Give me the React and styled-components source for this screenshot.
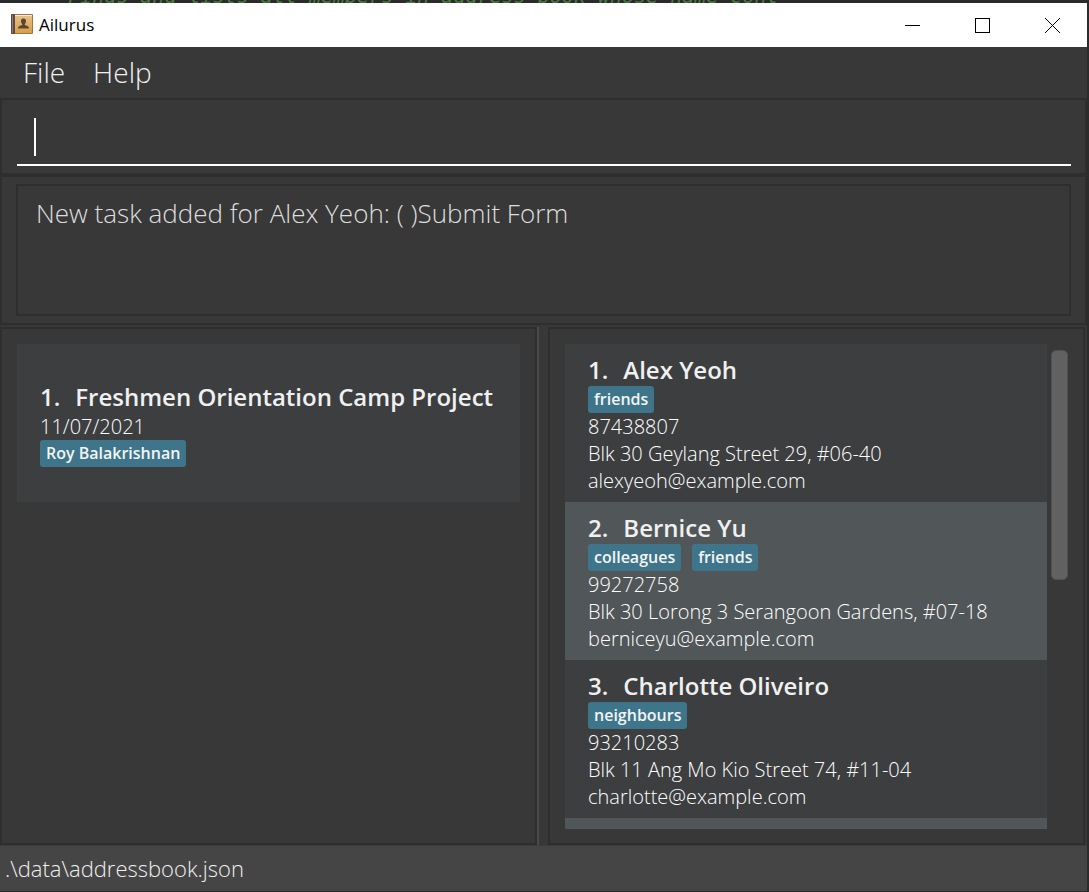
import React from 'react';
import styled, { createGlobalStyle } from 'styled-components';

const Global = createGlobalStyle`
  * { box-sizing: border-box; }
  html, body, #root { height: 100%; }
  body {
    margin: 0;
    background: #2b2b2b;
    color: #f0f0f0;
    font-family: 'Open Sans', 'Noto Sans', sans-serif;
    overflow: hidden;
  }
  button, input { font: inherit; color: inherit; background: none; border: 0; padding: 0; margin: 0; }
`;

const Desktop = styled.div`
  height: 100vh;
  display: flex;
  flex-direction: column;
  padding: 0 2px 1px 0;
`;

const EditorStrip = styled.div`
  flex: 0 0 3px;
  overflow: hidden;
  display: flex;
  align-items: flex-end;
  padding-left: 44px;
  font: italic 20px/14px 'DejaVu Sans Mono', monospace;
  white-space: pre;
  color: #4a7a40;
`;

const Window = styled.main`
  flex: 1;
  min-height: 0;
  display: flex;
  flex-direction: column;
  background: #383838;
`;

const TitleBar = styled.header`
  flex: 0 0 44px;
  display: flex;
  align-items: center;
  background: #fff;
  color: #000;
  padding-left: 11px;
`;

const Title = styled.h1`
  flex: 1;
  margin: 0 0 0 6px;
  font: 400 17px/24px 'Open Sans', sans-serif;
`;

const WindowButton = styled.button`
  width: 70px;
  height: 44px;
  display: grid;
  place-items: center;
`;

const MenuBar = styled.nav`
  flex: 0 0 51px;
  display: flex;
  gap: 28px;
  padding: 0 23px;
`;

const MenuButton = styled.button`
  font-size: 28px;
  line-height: 48px;
  font-weight: 300;
  padding-bottom: 2px;
`;

const Panel = styled.section`
  border: 2px solid #2e2e2e;
  padding: ${(p) => p.$pad};
`;

const CommandInput = styled.input`
  display: block;
  width: 100%;
  height: 51px;
  padding: 0 18px;
  font-size: 28px;
  font-weight: 300;
  border-bottom: 2px solid #fff;
  outline: none;
  caret-color: transparent;
`;

const CommandBox = styled.div`
  position: relative;
`;

const Caret = styled.span`
  position: absolute;
  left: 17px;
  top: 3px;
  width: 2px;
  height: 38px;
  background: #fff;
`;

const Result = styled.output`
  display: block;
  height: 132px;
  border: 2px solid #2e2e2e;
  padding: 8px 18px;
  font-size: 26px;
  line-height: 38px;
  font-weight: 300;
  color: #dedede;
`;

const Split = styled.div`
  flex: 1;
  min-height: 0;
  display: flex;
  margin: 2px 2px 0 0;
`;

const Pane = styled(Panel)`
  flex: 1 1 0;
  min-width: 0;
  overflow: hidden;
  display: flex;
`;

const Divider = styled.div`
  flex: 0 0 11px;
  border-left: 2px solid #4a4a4a;
`;

const List = styled.ul`
  flex: 1;
  min-width: 0;
  margin: 0;
  padding: 0;
  list-style: none;
  overflow: hidden;
`;

const Card = styled.li`
  height: 158px;
  display: flex;
  flex-direction: column;
  justify-content: center;
  padding: 2px 23px 0;
  background: ${(p) => (p.$alt ? '#515658' : '#3c3e3f')};
`;

const Name = styled.h2`
  margin: 0;
  display: flex;
  gap: 15px;
  font-size: 24px;
  line-height: 32px;
  font-weight: 600;
  white-space: nowrap;
`;

const Line = styled.p`
  margin: 0;
  font-size: 20px;
  line-height: 27px;
  font-weight: 300;
  color: #fff;
  white-space: nowrap;
`;

const Tags = styled.div`
  display: flex;
  gap: 11px;
`;

const Tag = styled.span`
  padding: 0 6px;
  border-radius: 3px;
  background: #3e758a;
  color: #f4f4f4;
  font-size: 16px;
  line-height: 27px;
  font-weight: 600;
`;

const ScrollTrack = styled.div`
  flex: 0 0 21px;
  padding: 6px 0 0 4px;
`;

const ScrollThumb = styled.div`
  width: 17px;
  height: 48%;
  border: 1px solid #505050;
  border-radius: 5px;
  background: #616161;
`;

const StatusBar = styled.footer`
  flex: 0 0 46px;
  padding: 0 5px;
  background: #454545;
  border-top: 1px solid #3c3c3c;
  font-size: 22px;
  line-height: 44px;
  font-weight: 300;
`;

const people = [
  { name: 'Alex Yeoh', tags: ['friends'], phone: '87438807', address: 'Blk 30 Geylang Street 29, #06-40', email: 'alexyeoh@example.com' },
  { name: 'Bernice Yu', tags: ['colleagues', 'friends'], phone: '99272758', address: 'Blk 30 Lorong 3 Serangoon Gardens, #07-18', email: 'berniceyu@example.com' },
  { name: 'Charlotte Oliveiro', tags: ['neighbours'], phone: '93210283', address: 'Blk 11 Ang Mo Kio Street 74, #11-04', email: 'charlotte@example.com' },
];

function BookIcon() {
  return (
    <svg width="22" height="22" viewBox="0 0 22 22" aria-hidden="true">
      <defs>
        <linearGradient id="cover" x1="0" y1="0" x2="0" y2="1">
          <stop offset="0" stopColor="#e6c289" />
          <stop offset="1" stopColor="#d6a04a" />
        </linearGradient>
      </defs>
      <rect x="0" y="0" width="22" height="20" rx="1" fill="#a5763a" />
      <rect x="4" y="1" width="17" height="18" fill="url(#cover)" />
      <rect x="4" y="1" width="17" height="1" fill="#f6ead6" />
      <rect x="0" y="0" width="4" height="20" rx="1" fill="#5d4a42" />
      <rect x="1" y="1" width="1" height="18" fill="#8a7a74" />
      <path d="M12.500 4.500c-1.800 0-2.700 1.300-2.500 2.900.1 1.200.6 1.900 1.200 2.500v1.200c-1.800.5-4.200 1-4.200 3.400h11c0-2.400-2.400-2.900-4.200-3.400v-1.200c.6-.6 1.100-1.300 1.200-2.500.2-1.600-.7-2.900-2.500-2.900z" fill="#5b4636" />
    </svg>
  );
}

export default function App() {
  return (
    <Desktop>
      <Global />
      <EditorStrip>* Finds and lists all members in address book whose name cont</EditorStrip>
      <Window>
        <TitleBar>
          <BookIcon />
          <Title>Ailurus</Title>
          <WindowButton aria-label="Minimize">
            <svg width="15" height="15" shapeRendering="crispEdges"><rect y="7" width="15" height="1" /></svg>
          </WindowButton>
          <WindowButton aria-label="Maximize">
            <svg width="15" height="15" shapeRendering="crispEdges"><rect x=".5" y=".5" width="14" height="14" fill="none" stroke="#000" /></svg>
          </WindowButton>
          <WindowButton aria-label="Close">
            <svg width="15" height="15"><path d="M0 0l15 15M15 0L0 15" stroke="#000" /></svg>
          </WindowButton>
        </TitleBar>
        <MenuBar>
          <MenuButton>File</MenuButton>
          <MenuButton>Help</MenuButton>
        </MenuBar>
        <Panel $pad="15px 14px 7px 15px">
          <CommandBox>
            <CommandInput aria-label="Command" />
            <Caret />
          </CommandBox>
        </Panel>
        <Panel $pad="7px 14px 7px 14px">
          <Result>New task added for Alex Yeoh: ( )Submit Form</Result>
        </Panel>
        <Split>
          <Pane $pad="15px 15px 14px">
            <List>
              <Card>
                <Name><span>1.</span><span>Freshmen Orientation Camp Project</span></Name>
                <Line>11/07/2021</Line>
                <Tags><Tag>Roy Balakrishnan</Tag></Tags>
              </Card>
            </List>
          </Pane>
          <Divider />
          <Pane $pad="15px 15px 14px">
            <List>
              {people.map((p, i) => (
                <Card key={p.name} $alt={i % 2 === 1}>
                  <Name><span>{i + 1}.</span><span>{p.name}</span></Name>
                  <Tags>{p.tags.map((t) => <Tag key={t}>{t}</Tag>)}</Tags>
                  <Line>{p.phone}</Line>
                  <Line>{p.address}</Line>
                  <Line>{p.email}</Line>
                </Card>
              ))}
              <Card $alt />
            </List>
            <ScrollTrack><ScrollThumb /></ScrollTrack>
          </Pane>
        </Split>
        <StatusBar>.\data\addressbook.json</StatusBar>
      </Window>
    </Desktop>
  );
}
